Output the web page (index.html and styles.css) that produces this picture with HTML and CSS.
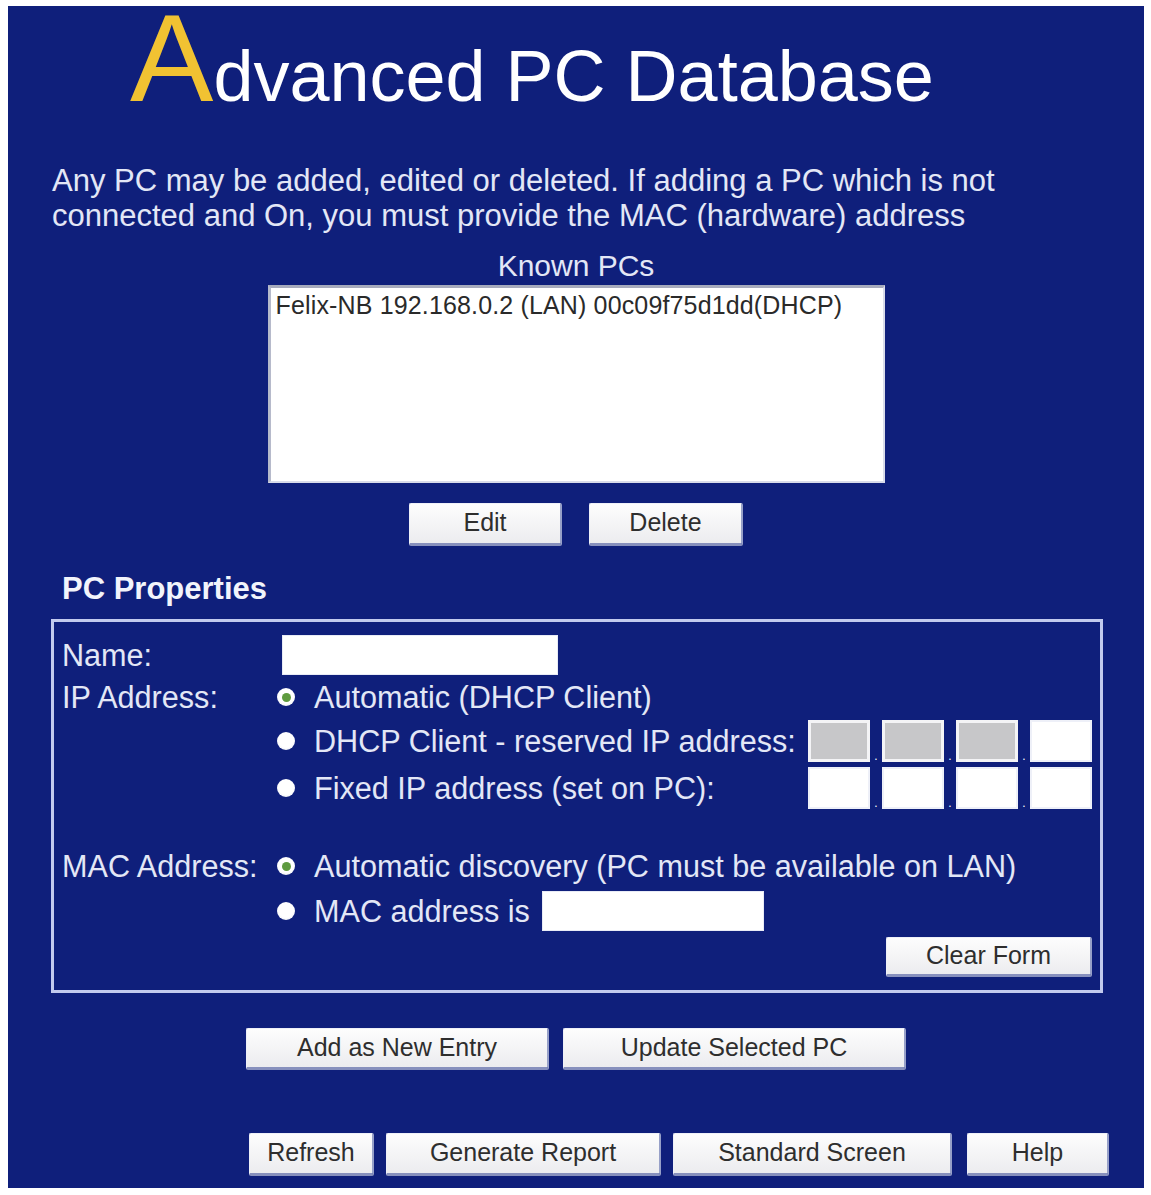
FILE: index.html
```html
<!DOCTYPE html>
<html lang="en">
<head>
<meta charset="utf-8">
<title>Advanced PC Database</title>
<link rel="stylesheet" href="styles.css">
</head>
<body>
<div class="panel">
  <h1 class="title"><span class="cap">A</span>dvanced PC Database</h1>
  <p class="intro">Any PC may be added, edited or deleted. If adding a PC which is not<br>connected and On, you must provide the MAC (hardware) address</p>
  <div class="known-label">Known PCs</div>
  <div class="listbox">
    <div class="list-item">Felix-NB 192.168.0.2 (LAN) 00c09f75d1dd(DHCP)</div>
  </div>
  <div class="btn-row btn-row-list">
    <button class="btn btn-edit">Edit</button>
    <button class="btn btn-delete">Delete</button>
  </div>
  <h2 class="section-title">PC Properties</h2>
  <div class="props">
    <div class="props-grid">
      <div class="label">Name:</div>
      <div class="cell"><input class="field name-field" type="text"></div>

      <div class="label">IP Address:</div>
      <div class="cell opt"><span class="radio on"></span><span class="opt-text">Automatic (DHCP Client)</span></div>

      <div class="label"></div>
      <div class="cell opt"><span class="radio"></span><span class="opt-text opt-text-fixed">DHCP Client - reserved IP address:</span>
        <div class="octets">
          <span class="oct oct-gray"></span><span class="dot">.</span><span class="oct oct-gray"></span><span class="dot">.</span><span class="oct oct-gray"></span><span class="dot">.</span><span class="oct"></span>
        </div>
      </div>

      <div class="label"></div>
      <div class="cell opt"><span class="radio"></span><span class="opt-text opt-text-fixed">Fixed IP address (set on PC):</span>
        <div class="octets">
          <span class="oct"></span><span class="dot">.</span><span class="oct"></span><span class="dot">.</span><span class="oct"></span><span class="dot">.</span><span class="oct"></span>
        </div>
      </div>

      <div class="spacer"></div>
      <div class="spacer"></div>

      <div class="label label-mac">MAC Address:</div>
      <div class="cell opt"><span class="radio on"></span><span class="opt-text">Automatic discovery (PC must be available on LAN)</span></div>

      <div class="label"></div>
      <div class="cell opt"><span class="radio"></span><span class="opt-text">MAC address is</span><input class="field mac-field" type="text"></div>

      <div class="label"></div>
      <div class="cell clear-cell"><button class="btn btn-clear">Clear Form</button></div>
    </div>
  </div>
  <div class="btn-row btn-row-entry">
    <button class="btn btn-add">Add as New Entry</button>
    <button class="btn btn-update">Update Selected PC</button>
  </div>
  <div class="btn-row btn-row-bottom">
    <button class="btn btn-refresh">Refresh</button>
    <button class="btn btn-report">Generate Report</button>
    <button class="btn btn-standard">Standard Screen</button>
    <button class="btn btn-help">Help</button>
  </div>
</div>
</body>
</html>
```

FILE: styles.css
```css
html, body {
  margin: 0;
  padding: 0;
  background: #ffffff;
}

.panel {
  margin: 6px 0 0 8px;
  width: 1136px;
  height: 1182px;
  box-sizing: border-box;
  padding-top: 2px;
  background: #0f1f7b;
  font-family: "Liberation Sans", Arial, sans-serif;
  color: #e3e7f6;
}

.title {
  margin: 0;
  padding-left: 122px;
  height: 100px;
  font-size: 72px;
  line-height: 60px;
  font-weight: normal;
  color: #ffffff;
  white-space: nowrap;
}

.cap {
  font-size: 125px;
  line-height: 100px;
  color: #f1c232;
}

.intro {
  margin: 55px 0 0 0;
  padding-left: 44px;
  font-size: 31px;
  line-height: 35px;
  letter-spacing: 0;
}

.known-label {
  margin-top: 16px;
  text-align: center;
  font-size: 30px;
  line-height: 34px;
}

.listbox {
  margin: 2px auto 0;
  width: 617px;
  height: 198px;
  box-sizing: border-box;
  background: #ffffff;
  border-top: 3px solid #a7abbd;
  border-left: 3px solid #b6bacb;
  border-right: 2px solid #d9dcea;
  border-bottom: 2px solid #d9dcea;
  padding: 3px 0 0 5px;
}

.list-item {
  font-size: 25px;
  line-height: 28px;
  letter-spacing: 0.15px;
  color: #2a2a2a;
  white-space: nowrap;
}

.btn-row {
  display: flex;
}

.btn {
  box-sizing: border-box;
  height: 43px;
  padding: 0 0 2px 0;
  font-family: "Liberation Sans", Arial, sans-serif;
  font-size: 25px;
  color: #2e2e2e;
  background: linear-gradient(#fdfdfd, #ececef);
  border-top: 1px solid #eef0f8;
  border-left: 1px solid #eef0f8;
  border-right: 2px solid #97a0c8;
  border-bottom: 3px solid #8790bd;
  border-radius: 2px;
}

.btn-row-list {
  margin-top: 20px;
  justify-content: center;
  gap: 27px;
}

.btn-edit { width: 153px; }
.btn-delete { width: 154px; }

.section-title {
  margin: 26px 0 0 0;
  padding-left: 54px;
  font-size: 31px;
  line-height: 34px;
  font-weight: bold;
  color: #f2f4fb;
}

.props {
  margin: 13px 0 0 43px;
  width: 1052px;
  height: 374px;
  box-sizing: border-box;
  border: 3px solid #c2caee;
  padding: 12px 12px 10px 8px;
}

.props-grid {
  display: grid;
  grid-template-columns: 215px 1fr;
  grid-template-rows: 42px 42px 46px 48px 33px 42px 48px 45px;
}

.label {
  font-size: 30.6px;
  display: flex;
  align-items: center;
  white-space: nowrap;
}

.cell {
  display: flex;
  align-items: center;
}

.field {
  box-sizing: border-box;
  height: 40px;
  background: #ffffff;
  border: 1px solid #e8ebf6;
  margin: 0;
  padding: 0;
}

.name-field {
  width: 276px;
  margin-left: 5px;
}

.mac-field {
  width: 222px;
  margin-left: 12px;
}

.radio {
  flex: none;
  width: 18px;
  height: 18px;
  border-radius: 50%;
  background: radial-gradient(circle at 50% 45%, #ffffff 55%, #dfe3ee 100%);
  margin-right: 19px;
  display: flex;
  align-items: center;
  justify-content: center;
}

.radio.on::after {
  content: "";
  width: 9px;
  height: 9px;
  border-radius: 50%;
  background: #5f9b3f;
}

.opt-text {
  font-size: 30.6px;
  white-space: nowrap;
}

.opt-text-fixed {
  width: 494px;
  flex: none;
}

.octets {
  display: flex;
  align-items: flex-end;
}

.oct {
  box-sizing: border-box;
  width: 62px;
  height: 42px;
  background: #ffffff;
  border: 2px solid #eef0f8;
}

.oct-gray {
  background: #c7c7c9;
  border: 3px solid #f4f4f6;
}

.dot {
  width: 12px;
  text-align: center;
  font-size: 12px;
  line-height: 12px;
  color: #ffffff;
}

.spacer {
  height: 33px;
}

.clear-cell {
  justify-content: flex-end;
  align-items: flex-end;
  padding-bottom: 3px;
}

.btn-clear {
  width: 206px;
  height: 40px;
}

.btn-row-entry {
  margin-top: 35px;
  justify-content: center;
  gap: 14px;
}

.btn-add { width: 303px; height: 42px; }
.btn-update { width: 343px; height: 42px; }

.btn-row-bottom {
  margin-top: 63px;
  padding-left: 241px;
}

.btn-refresh { width: 125px; }
.btn-report { width: 275px; margin-left: 12px; }
.btn-standard { width: 279px; margin-left: 12px; }
.btn-help { width: 142px; margin-left: 15px; }
```
